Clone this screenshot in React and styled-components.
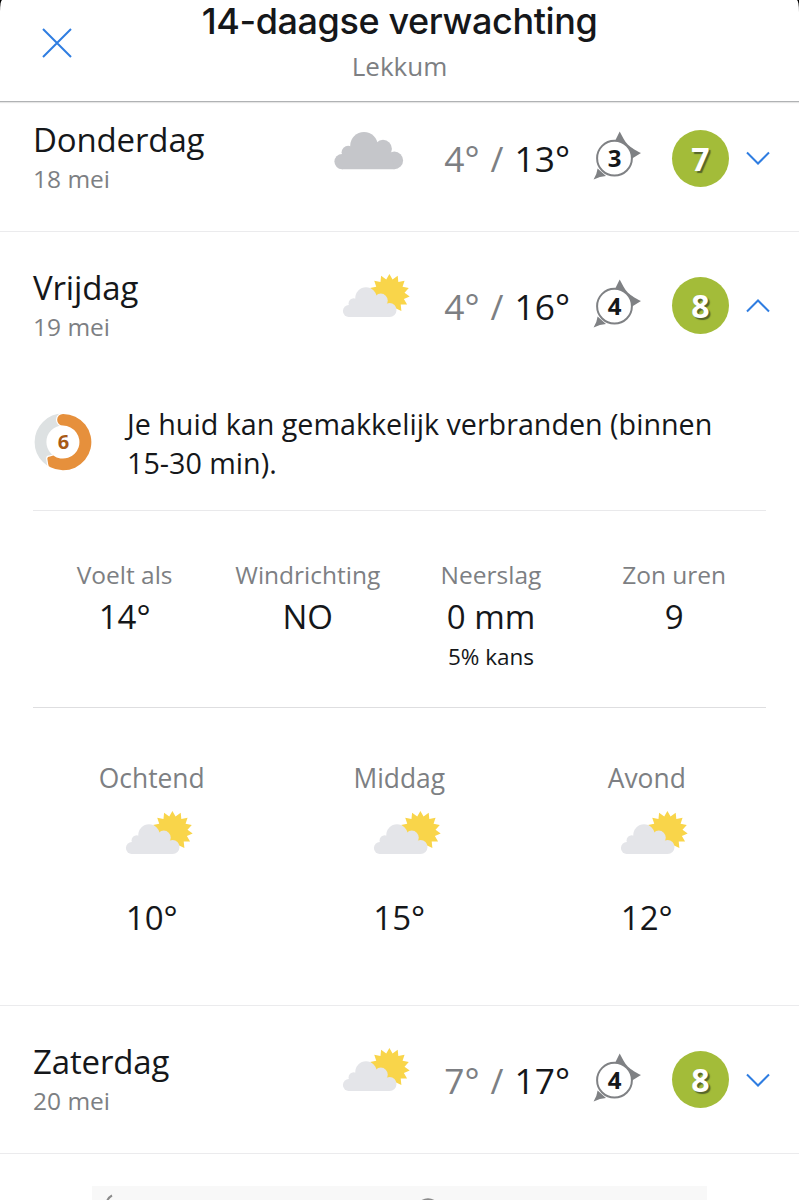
import styled, { createGlobalStyle, css } from "styled-components";

const GlobalStyle = createGlobalStyle`
  * {
    box-sizing: border-box;
  }

  body {
    margin: 0;
    background: #000;
    overflow: hidden;
    font-family: "Open Sans", "Noto Sans", sans-serif;
    color: #15171a;
  }

  p, h1, h2 {
    margin: 0;
    font-weight: 400;
    white-space: nowrap;
  }
`

const Sheet = styled.main`
  display: flex;
  flex-direction: column;
  width: 799px;
  height: 1200px;
  overflow: hidden;
  background: #fff;
  border-radius: 2px 2px 0 0 / 12px 12px 0 0;
`

const Header = styled.header`
  display: grid;
  grid-template-columns: 115px 1fr 115px;
  height: 102px;
  flex: none;
  border-bottom: 1px solid #b0b2b4;
  box-shadow: 0 1px 1px #e6e6e6;
`

const CloseButton = styled.button`
  display: flex;
  padding: 28px 0 0 42px;
  border: 0;
  background: none;
`

const Heading = styled.div`
  text-align: center;
`

const Title = styled.h1`
  font-family: Inter, sans-serif;
  font-size: 36px;
  font-weight: 500;
  line-height: 43px;
  letter-spacing: -0.4px;
`

const Place = styled.p`
  font-size: 26px;
  line-height: 46px;
  color: #7d7f83;
`

const Day = styled.section`
  flex: none;
  border-bottom: 1px solid #ebebed;
`

const DayRow = styled.div`
  display: grid;
  grid-template-columns: 301px 77px 159px 23px 48px 31px 57px 17px 24px;
  align-items: center;
  height: ${({$clipped}) => $clipped ? "129px" : "147px"};
  padding-left: 33px;
  padding-bottom: ${({$clipped}) => $clipped ? "17px" : "0"};
`

const DayLabel = styled.div`
  padding-top: 1px;
`

const DayName = styled.h2`
  font-size: 33px;
  line-height: 40px;
  letter-spacing: -0.15px;
`

const DayDate = styled.p`
  font-size: 24.5px;
  line-height: 37px;
  color: #7d7f83;
`

const Temps = styled.p`
  grid-column: 3;
  font-size: 35.3px;
  line-height: 40px;
  text-align: right;
  word-spacing: 1.8px;

  span {
    color: #7d7f83;
  }
`

const Wind = styled.div`
  grid-column: 5;
  display: grid;
  height: 50px;
  margin-bottom: 4px;

  > * {
    grid-area: 1 / 1;
  }
`

const WindForce = styled.span`
  width: 43px;
  padding-top: 7px;
  font-size: 24px;
  font-weight: 700;
  line-height: 40px;
  text-align: center;
`

const Grade = styled.span`
  grid-column: 7;
  height: 57px;
  border-radius: 50%;
  background: #a3bc39;
  color: #fff;
  font-size: 32px;
  font-weight: 700;
  line-height: 57px;
  text-align: center;
  text-shadow: 2px 2px 1px #56652a;
`

const Toggle = styled.span`
  grid-column: 9;
  display: flex;
  ${({$open}) => $open && css`
    transform: rotate(180deg);
  `}
`

const Details = styled.div`
  display: flex;
  flex-direction: column;
  height: 626px;
  padding: 0 33px;
`

const SunAdvice = styled.div`
  display: grid;
  grid-template-columns: 60px 600px;
  column-gap: 34px;
  height: 132px;
  padding-top: 25px;
  border-bottom: 1px solid #e9e9eb;

  p {
    font-size: 28.7px;
    line-height: 39px;
    white-space: normal;
  }
`

const UvBadge = styled.div`
  display: grid;
  place-items: center;
  width: 60px;
  height: 60px;
  margin-top: 8px;

  > * {
    grid-area: 1 / 1;
  }

  span {
    padding-left: 1px;
    font-size: 20px;
    font-weight: 700;
    line-height: 20px;
    color: #a85a17;
  }
`

const Stats = styled.div`
  display: grid;
  grid-template-columns: repeat(4, 183.2px);
  height: 197px;
  padding-top: 44px;
  border-bottom: 1px solid #dedee0;
  text-align: center;
`

const Label = styled.p`
  font-size: 24.5px;
  line-height: 39px;
  color: #7d7f83;
`

const Value = styled.p`
  font-size: 33px;
  line-height: 45px;
`

const Chance = styled.p`
  font-size: 22.5px;
  line-height: 36px;
`

const Parts = styled.div`
  display: grid;
  grid-template-columns: repeat(3, 247.5px);
  margin: 0 -5px;
  padding-top: 50px;
  text-align: center;
`

const Part = styled.div`
  display: flex;
  flex-direction: column;
  align-items: center;

  svg {
    margin: 13px 0 20px 8px;
  }
`

const PartLabel = styled(Label)`
  font-size: 26.4px;
  line-height: 40px;
`

const Banner = styled.div`
  width: 615px;
  height: 14px;
  margin: 32px 0 0 92px;
  background: #f8f8f8;

  svg {
    display: block;
  }
`

const CloudShape = ({ fill }) => (
  <g fill={fill}>
    <circle cx="8" cy="29.8" r="7.6" />
    <circle cx="14.2" cy="20.5" r="6.6" />
    <circle cx="30" cy="14" r="13.8" />
    <circle cx="49" cy="16.9" r="8.9" />
    <circle cx="60.3" cy="28.6" r="8.8" />
    <path d="M8 37.4V27L14 17H49L58 25L60.3 37.4Z" />
  </g>
);

// star outline with 15 short rays
const sunPoints = Array.from({ length: 30 }, (_, i) => {
  const r = i % 2 ? 15.2 : 20.4;
  const a = (i * Math.PI) / 15;
  return `${(55.4 + r * Math.sin(a)).toFixed(2)},${(20.4 - r * Math.cos(a)).toFixed(2)}`;
}).join(" ");

const WeatherIcon = ({ type }) => (
  <svg width="77" height="64" viewBox="0 0 77 64">
    {type === "cloud" ? (
      <g transform="translate(0 5.8)">
        <CloudShape fill="#c5c6ca" />
      </g>
    ) : (
      <>
        <polygon points={sunPoints} fill="#f9d54a" />
        <g transform="translate(8.6 13.2) scale(.78 .8)">
          <CloudShape fill="#e4e5e9" />
        </g>
      </>
    )}
  </svg>
);

const WindArrow = () => (
  <svg width="48" height="50" viewBox="0 0 48 50">
    <path
      d="M26.7.5L21.5 11L32 20L37.5 28.5L48 22C43.5 20.3 38 16.5 35 13.8C31.5 10.5 29.5 5.5 26.7.5ZM.6 48.5Q4 43 4.6 37.500L13 45Q7 45.300.6 48.500Z"
      fill="#7f8184"
    />
    <circle cx="21.5" cy="27.2" r="17.4" fill="#fff" stroke="#7f8184" strokeWidth="2" />
  </svg>
);

const UvRing = () => (
  <svg width="60" height="60" viewBox="0 0 60 60">
    <circle cx="30" cy="30" r="22.5" fill="none" stroke="#dde1e2" strokeWidth="11.8" />
    <path
      d="M30 1.9A28.2 28.2 0 1 1 17.5 55.3Q15.3 54.5 15.2 52.2L14.3 46.5Q14.3 44.5 17 44.5L20.3 43.5A16.5 16.5 0 1 0 30 13.6A5.85 5.85 0 0 1 30 1.9Z"
      fill="#e6903c"
      stroke="#fff"
      strokeWidth="2.4"
      paintOrder="stroke"
    />
  </svg>
);

const Forecast = ({ day, children }) => (
  <Day>
    <DayRow $clipped={day.clipped}>
      <DayLabel>
        <DayName>{day.name}</DayName>
        <DayDate>{day.date}</DayDate>
      </DayLabel>
      <WeatherIcon type={day.icon} />
      <Temps>
        <span>{day.min}° / </span>{day.max}°
      </Temps>
      <Wind>
        <WindArrow />
        <WindForce>{day.wind}</WindForce>
      </Wind>
      <Grade>{day.grade}</Grade>
      <Toggle $open={Boolean(children)}>
        <svg width="24" height="14" viewBox="0 0 24 14" fill="none" stroke="#2f7de1" strokeWidth="2">
          <path d="M1 1.5L12 12.5L23 1.5" />
        </svg>
      </Toggle>
    </DayRow>
    {children}
  </Day>
);

const days = [
  { name: "Donderdag", date: "18 mei", icon: "cloud", min: 4, max: 13, wind: 3, grade: 7, clipped: true },
  { name: "Vrijdag", date: "19 mei", icon: "sun", min: 4, max: 16, wind: 4, grade: 8, open: true },
  { name: "Zaterdag", date: "20 mei", icon: "sun", min: 7, max: 17, wind: 4, grade: 8 },
];

const stats = [
  { label: "Voelt als", value: "14°" },
  { label: "Windrichting", value: "NO" },
  { label: "Neerslag", value: "0 mm", extra: "5% kans" },
  { label: "Zon uren", value: "9" },
];

const parts = [
  { label: "Ochtend", temp: 10 },
  { label: "Middag", temp: 15 },
  { label: "Avond", temp: 12 },
];

const DayDetails = () => (
  <Details>
    <SunAdvice>
      <UvBadge>
        <UvRing />
        <span>6</span>
      </UvBadge>
      <p>Je huid kan gemakkelijk verbranden (binnen 15-30 min).</p>
    </SunAdvice>
    <Stats>
      {stats.map(({ label, value, extra }) => (
        <div key={label}>
          <Label>{label}</Label>
          <Value>{value}</Value>
          {extra && <Chance>{extra}</Chance>}
        </div>
      ))}
    </Stats>
    <Parts>
      {parts.map(({ label, temp }) => (
        <Part key={label}>
          <PartLabel>{label}</PartLabel>
          <WeatherIcon type="sun" />
          <Value>{temp}°</Value>
        </Part>
      ))}
    </Parts>
  </Details>
);

const App = () => {
  return (
    <>
      <GlobalStyle />
      <Sheet>
        <Header>
          <CloseButton aria-label="Sluiten">
            <svg width="30" height="30" viewBox="0 0 30 30" stroke="#2f7de1" strokeWidth="2">
              <path d="M1 1L29 29M29 1L1 29" />
            </svg>
          </CloseButton>
          <Heading>
            <Title>14-daagse verwachting</Title>
            <Place>Lekkum</Place>
          </Heading>
        </Header>
        {days.map((day) => (
          <Forecast key={day.name} day={day}>
            {day.open && <DayDetails />}
          </Forecast>
        ))}
        <Banner>
          <svg width="615" height="14" fill="none" stroke="#8b8b8b" strokeWidth="2">
            <path d="M20 9.5Q17 11 15 15" />
            <path d="M329 15.5Q336 11 343 15.5" />
          </svg>
        </Banner>
      </Sheet>
    </>
  );
};

export default App;
